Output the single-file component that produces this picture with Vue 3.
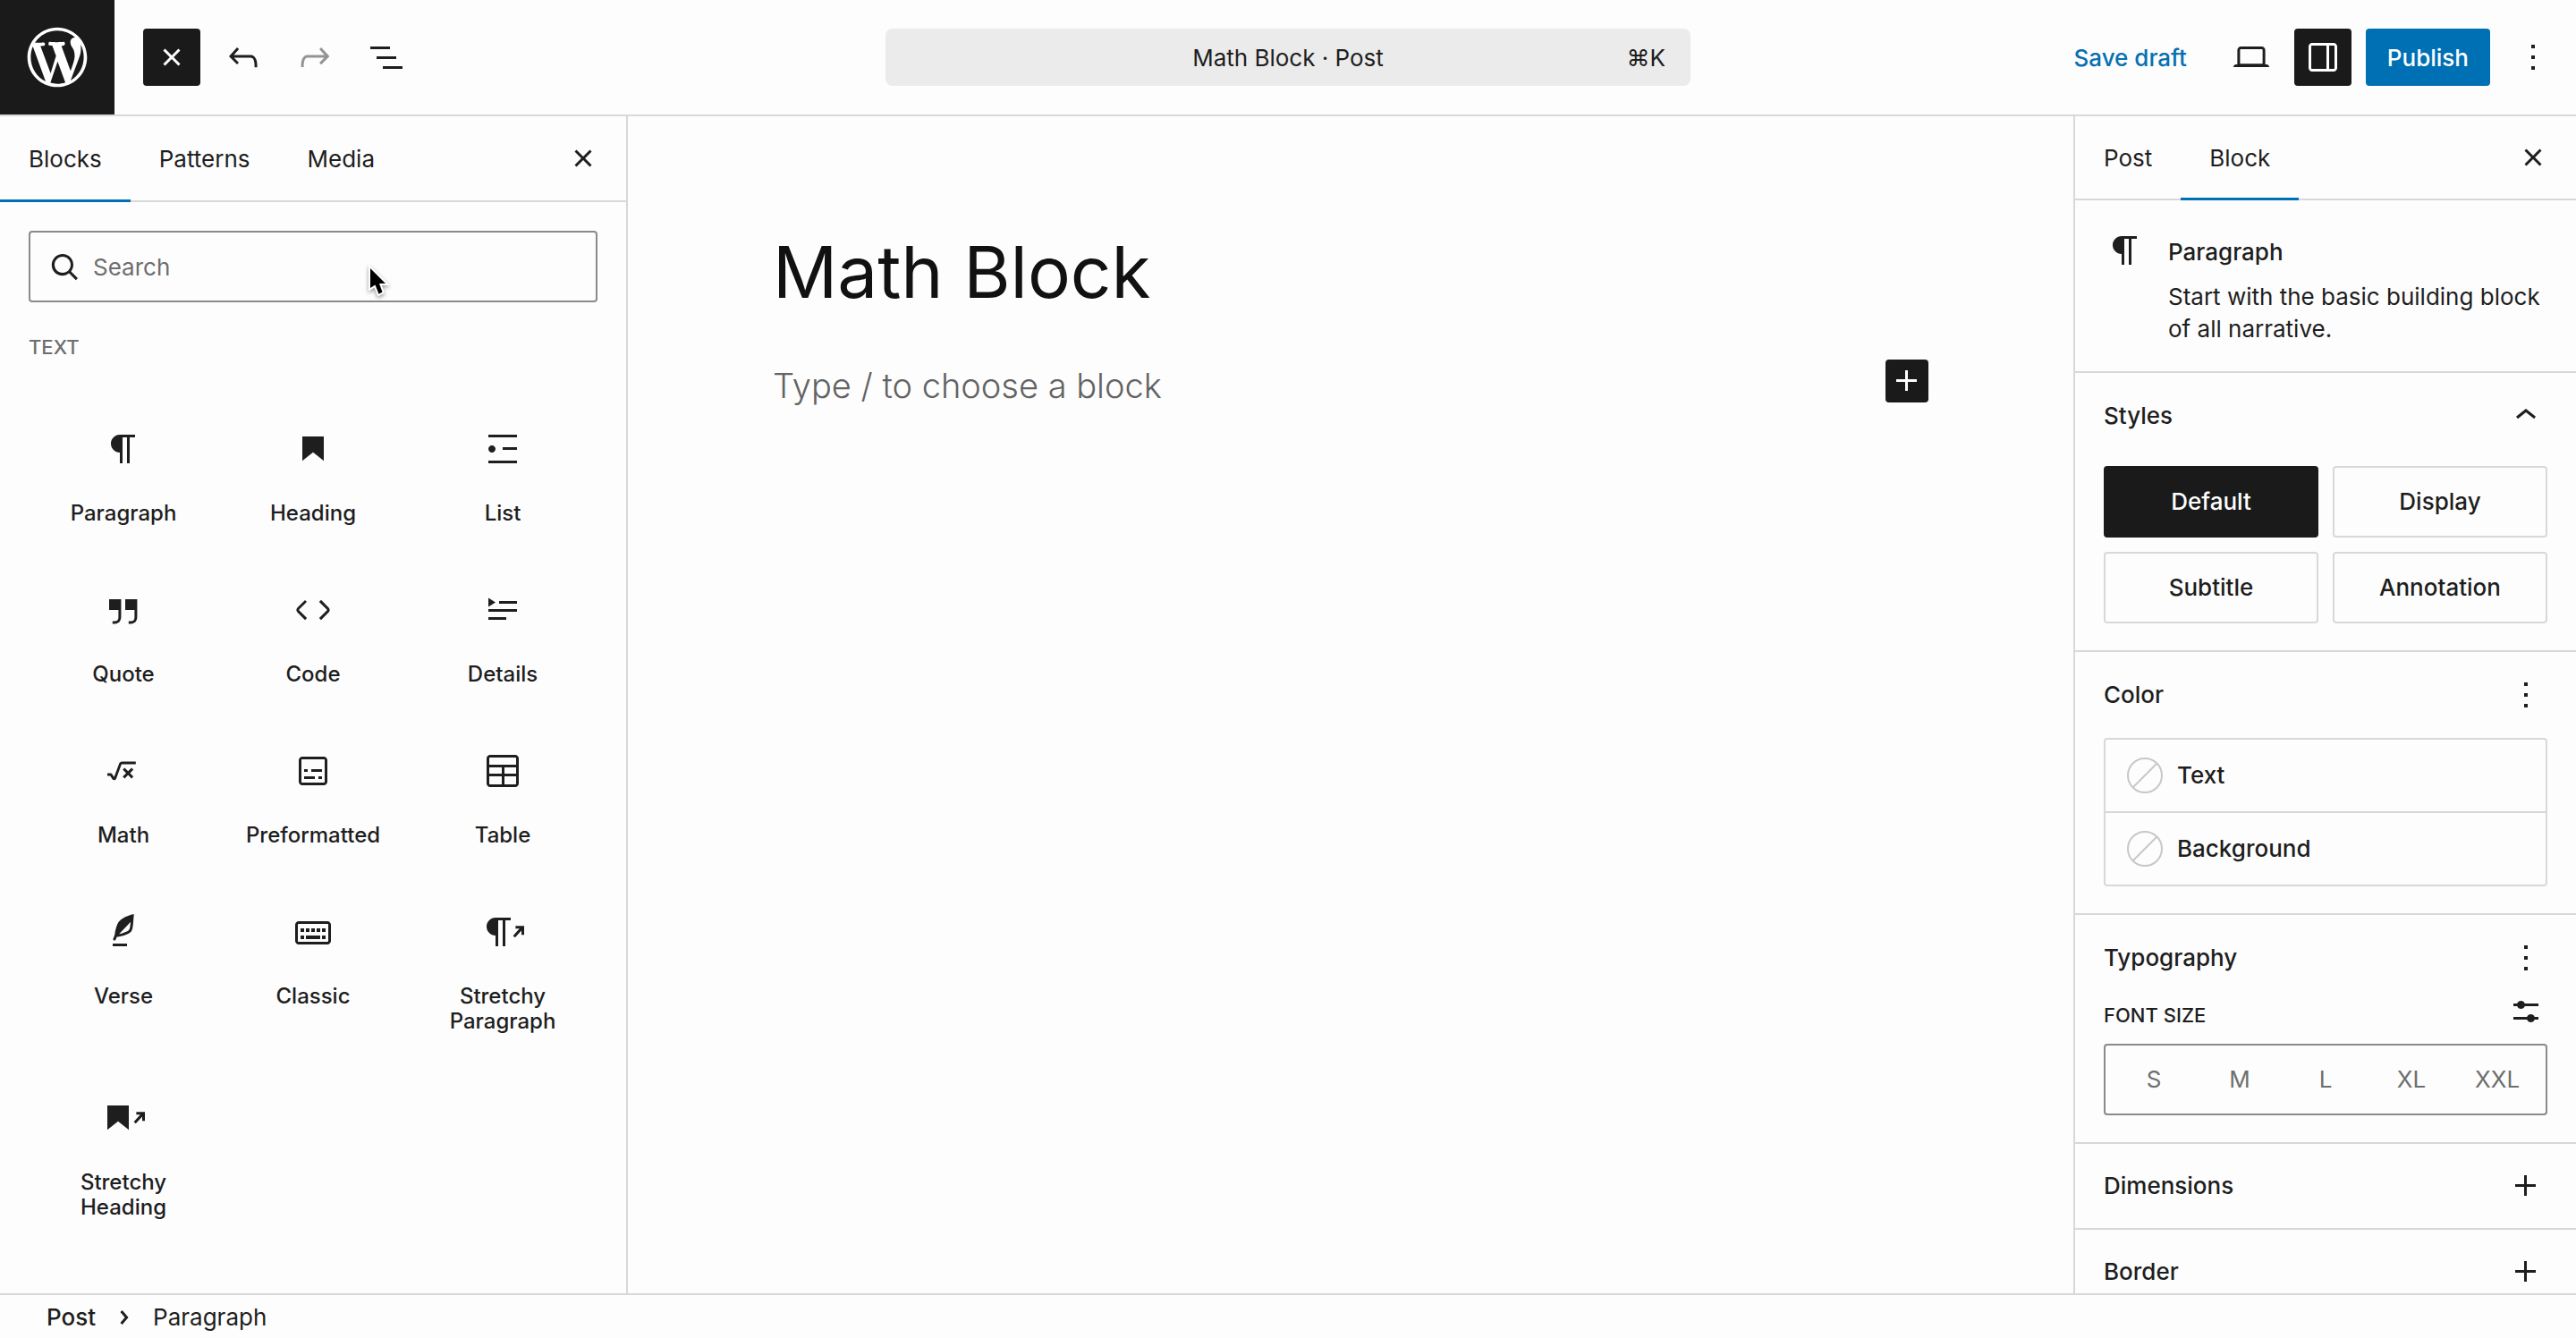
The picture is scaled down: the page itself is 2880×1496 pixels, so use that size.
<script setup>
import { h, ref } from 'vue'

const paths = {
  wordpress: 'M20 10c0-5.51-4.49-10-10-10C4.48 0 0 4.49 0 10c0 5.52 4.48 10 10 10 5.51 0 10-4.48 10-10zM7.78 15.37L4.37 6.22c.55-.02 1.17-.08 1.17-.08.5-.06.44-1.13-.06-1.11 0 0-1.45.11-2.37.11-.18 0-.37 0-.58-.01C4.12 2.69 6.87 1.11 10 1.11c2.33 0 4.45.87 6.05 2.34-.68-.11-1.65.39-1.65 1.58 0 .74.45 1.36.9 2.1.35.61.55 1.36.55 2.46 0 1.49-1.4 5-1.4 5l-3.03-8.37c.54-.02.82-.17.82-.17.5-.05.44-1.25-.06-1.22 0 0-1.44.12-2.38.12-.87 0-2.33-.12-2.33-.12-.5-.03-.56 1.2-.06 1.22l.92.08 1.26 3.41zM17.41 10c.24-.64.74-1.87.43-4.25.7 1.29 1.05 2.71 1.05 4.25 0 3.29-1.73 6.24-4.4 7.78.97-2.59 1.94-5.2 2.92-7.78zM6.1 18.09C3.12 16.65 1.11 13.53 1.11 10c0-1.3.23-2.48.72-3.59C3.25 10.3 4.67 14.2 6.1 18.09zm4.03-6.63l2.58 6.98c-.86.29-1.76.45-2.71.45-.79 0-1.57-.11-2.29-.33.81-2.38 1.62-4.74 2.42-7.1z',
  close: 'M12 13.06l3.712 3.713 1.061-1.06L13.061 12l3.712-3.712-1.06-1.06L12 10.938 8.288 7.227l-1.061 1.06L10.939 12l-3.712 3.712 1.06 1.061L12 13.061z',
  undo: 'M18.3 11.7c-.6-.6-1.4-.9-2.3-.9H6.7l2.9-3.3-1.1-1-4.5 5L8.5 16l1-1-2.7-2.7H16c.5 0 .9.2 1.3.5 1 1 1 3.4 1 4.5v.3h1.5v-.2c0-1.5 0-4.3-1.5-5.7z',
  redo: 'M15.6 6.5l-1.1 1 2.9 3.3H8c-.9 0-1.7.3-2.3.9-1.4 1.5-1.4 4.2-1.4 5.6v.2h1.5v-.3c0-1.1 0-3.5 1-4.5.3-.3.7-.5 1.3-.5h9.2L14.5 15l1.1 1.1 4.6-4.6-4.6-5z',
  listView: 'M3 6h11v1.5H3V6Zm3.5 5.5h11V13h-11v-1.5ZM21 17H10v1.5h11V17Z',
  laptop: 'M20.5 16h-.7V8c0-1.1-.9-2-2-2H6.2c-1.1 0-2 .9-2 2v8h-.7c-.8 0-1.5.7-1.5 1.5h20c0-.8-.7-1.5-1.5-1.5zM5.7 8c0-.3.2-.5.5-.5h11.6c.3 0 .5.2.5.5v7.6H5.7V8z',
  drawer: 'M18 4H6c-1.1 0-2 .9-2 2v12c0 1.1.9 2 2 2h12c1.1 0 2-.9 2-2V6c0-1.1-.9-2-2-2zm-4 14.5H6c-.3 0-.5-.2-.5-.5V6c0-.3.2-.5.5-.5h8v13zm4.5-.5c0 .3-.2.5-.5.5h-2.5v-13H18c.3 0 .5.2.5.5v12z',
  more: 'M13 19h-2v-2h2v2zm0-6h-2v-2h2v2zm0-6h-2V5h2v2z',
  search: 'M11 5c3.3 0 6 2.7 6 6 0 1.4-.5 2.7-1.3 3.7l3.8 3.8-1.1 1.1-3.8-3.8c-1 .8-2.3 1.3-3.7 1.3-3.3 0-6-2.7-6-6S7.7 5 11 5zm0 10.5c2.5 0 4.5-2 4.5-4.5s-2-4.5-4.5-4.5-4.5 2-4.5 4.5 2 4.5 4.5 4.5z',
  paragraph: 'm9.99609 14v-.2251l.00391.0001v6.225h1.5v-14.5h2.5v14.5h1.5v-14.5h3v-1.5h-8.50391c-2.76142 0-5 2.23858-5 5 0 2.7614 2.23858 5 5 5z',
  heading: 'M6 5V18.5911L12 13.8473L18 18.5911V5H6Z',
  list: 'M4 4v1.5h16V4H4zm8 8.5h8V11h-8v1.5zM4 20h16v-1.5H4V20zm4-8c0-1.1-.9-2-2-2s-2 .9-2 2 .9 2 2 2 2-.9 2-2z',
  quote: 'M13 6v6h5.2v4c0 .8-.2 1.4-.5 1.7-.6.6-1.6.6-2.5.5h-.3v1.5h.5c1 0 2.3-.1 3.3-1 .6-.6 1-1.6 1-2.8V6H13zm-9 6h5.2v4c0 .8-.2 1.4-.5 1.7-.6.6-1.6.6-2.5.5h-.3v1.5h.5c1 0 2.3-.1 3.3-1 .6-.6 1-1.6 1-2.8V6H4v6z',
  code: 'M20.8 10.7l-4.3-4.3-1.1 1.1 4.3 4.3c.1.1.1.3 0 .4l-4.3 4.3 1.1 1.1 4.3-4.3c.7-.8.7-1.9 0-2.6zM4.2 11.8l4.3-4.3-1-1-4.3 4.3c-.7.7-.7 1.8 0 2.5l4.3 4.3 1.1-1.1-4.3-4.3c-.2-.1-.2-.3-.1-.4z',
  details: 'M4 16h10v1.5H4V16Zm0-4.5h16V13H4v-1.5ZM10 7h10v1.5H10V7Zm-6-1.75 4 2.5-4 2.5v-5Z',
  math: 'M11.2 6.8c-.7 0-1.4.5-1.6 1.1l-2.8 7.5-1.2-1.8c-.1-.2-.4-.3-.6-.3H3v1.5h1.6l1.2 1.8c.6.9 1.9.7 2.2-.3l2.9-7.9s.1-.2.2-.2h7.8V6.7h-7.8Zm5.3 3.4-1.9 1.9-1.9-1.9-1.1 1.1 1.9 1.9-1.9 1.9 1.1 1.1 1.9-1.9 1.9 1.9 1.1-1.1-1.9-1.9 1.9-1.9-1.1-1.1Z',
  preformatted: 'M18 4H6c-1.1 0-2 .9-2 2v12c0 1.1.9 2 2 2h12c1.1 0 2-.9 2-2V6c0-1.1-.9-2-2-2zm.5 14c0 .3-.2.5-.5.5H6c-.3 0-.5-.2-.5-.5V6c0-.3.2-.5.5-.5h12c.3 0 .5.2.5.5v12zM7 16.5h6V15H7v1.5zm4-4h6V11h-6v1.5zM9 11H7v1.5h2V11zm6 5.5h2V15h-2v1.5z',
  table: 'M19 3H5c-1.1 0-2 .9-2 2v14c0 1.1.9 2 2 2h14c1.1 0 2-.9 2-2V5c0-1.1-.9-2-2-2zM5 4.5h14c.3 0 .5.2.5.5v3.5h-15V5c0-.3.2-.5.5-.5zm8 5.5h6.5v3.5H13V10zm-1.5 3.5h-7V10h7v3.5zm-7 5.5v-4h7v4.5H5c-.3 0-.5-.2-.5-.5zm14.5.5h-6V15h6.5v4c0 .3-.2.5-.5.5z',
  verse: 'M17.8 2l-.9.3c-.1 0-3.6 1-5.2 2.1C10 5.5 9.3 6.5 8.9 7.1c-.6.9-1.7 4.7-1.7 6.3l-.9 2.3c-.2.4 0 .8.4 1 .1 0 .2.1.3.1.3 0 .6-.2.7-.5l.6-1.5c.3 0 .7-.1 1.2-.2.7-.1 1.4-.3 2.2-.5.8-.2 1.6-.5 2.4-.8.7-.3 1.4-.7 1.9-1.2s.8-1.2 1-1.9c.2-.7.3-1.6.4-2.4.1-.8.1-1.7.2-2.5 0-.8.1-1.5.2-2.1V2zm-1.9 5.6c-.1.8-.2 1.5-.3 2.1-.2.6-.4 1-.6 1.3-.3.3-.8.6-1.4.9-.7.3-1.4.5-2.2.8-.6.2-1.3.3-1.8.4L15 7.5c.3-.3.6-.7 1-1.1 0 .4 0 .8-.1 1.2zM6 20h8v-1.5H6V20z',
  classic: 'M20 6H4c-1.1 0-2 .9-2 2v9c0 1.1.9 2 2 2h16c1.1 0 2-.9 2-2V8c0-1.1-.9-2-2-2zm.5 11c0 .3-.2.5-.5.5H4c-.3 0-.5-.2-.5-.5V8c0-.3.2-.5.5-.5h16c.3 0 .5.2.5.5v9zM10 10H8v2h2v-2zm-5 2h2v-2H5v2zm8-2h-2v2h2v-2zm-5 6h8v-2H8v2zm6-4h2v-2h-2v2zm3 0h2v-2h-2v2zm0 4h2v-2h-2v2zM5 16h2v-2H5v2z',
  stretchyParagraph: 'm7.99609 14v-.2251l.00391.0001v6.225h1.5v-14.5h2.5v14.5h1.5v-14.5h3v-1.5h-8.50391c-2.76142 0-5 2.23858-5 5 0 2.7614 2.23858 5 5 5zM19.2 8.6H24V13.600H22.500V11.300L18.900 15.100L17.800 14.100L21.400 10.100H19.200Z',
  stretchyHeading: 'M3 5V18.5911L9 13.8473L15 18.5911V5H3ZM19.2 8.6H24V13.600H22.500V11.300L18.900 15.100L17.800 14.100L21.400 10.100H19.200Z',
  chevronUp: 'M6.5 12.4L12 8l5.5 4.4-.9 1.2L12 10l-4.5 3.6-1-1.2z',
  chevronRight: 'M10.8622 8.04053L14.2805 12.0286L10.8622 16.0167L9.72327 15.0405L12.3049 12.0286L9.72327 9.01672L10.8622 8.04053Z',
  plus: 'M11 12.5V17.5H12.5V12.5H17.5V11H12.5V6H11V11H6V12.5H11Z',
  settings: 'm19 7.5h-7.628c-.3089-.87389-1.1423-1.5-2.122-1.5-.97966 0-1.81309.62611-2.12197 1.5h-2.12803v1.5h2.12803c.30888.87389 1.14231 1.5 2.12197 1.5.9797 0 1.8131-.62611 2.122-1.5h7.628zM19 15h-2.128c-.3089-.8739-1.1423-1.5-2.122-1.5s-1.8131.6261-2.122 1.5h-7.628v1.5h7.628c.3089.8739 1.1423 1.5 2.122 1.5s1.8131-.6261 2.122-1.5h2.128z'
}

const Icon = (props) => h('svg', {
  class: 'icon',
  viewBox: props.name === 'wordpress' ? '-2 -2 24 24' : '0 0 24 24',
  'aria-hidden': 'true'
}, [h('path', { d: paths[props.name] })])
Icon.props = ['name']

const blocks = [
  { icon: 'paragraph', label: 'Paragraph' },
  { icon: 'heading', label: 'Heading' },
  { icon: 'list', label: 'List' },
  { icon: 'quote', label: 'Quote' },
  { icon: 'code', label: 'Code' },
  { icon: 'details', label: 'Details' },
  { icon: 'math', label: 'Math' },
  { icon: 'preformatted', label: 'Preformatted' },
  { icon: 'table', label: 'Table' },
  { icon: 'verse', label: 'Verse' },
  { icon: 'classic', label: 'Classic' },
  { icon: 'stretchyParagraph', label: 'Stretchy Paragraph' },
  { icon: 'stretchyHeading', label: 'Stretchy Heading' }
]
const inserterTabs = ['Blocks', 'Patterns', 'Media']
const sidebarTabs = ['Post', 'Block']
const styles = ['Default', 'Display', 'Subtitle', 'Annotation']
const colors = ['Text', 'Background']
const sizes = ['S', 'M', 'L', 'XL', 'XXL']

const inserterTab = ref('Blocks')
const sidebarTab = ref('Block')
const style = ref('Default')
const size = ref('')
const search = ref('')
</script>

<template>
  <div class="editor">
    <header class="header">
      <a class="logo" href="#" aria-label="View Posts"><Icon name="wordpress" /></a>
      <div class="tools">
        <button class="icon-btn dark" aria-label="Close block inserter"><Icon name="close" /></button>
        <button class="icon-btn" aria-label="Undo"><Icon name="undo" /></button>
        <button class="icon-btn" aria-label="Redo" disabled><Icon name="redo" /></button>
        <button class="icon-btn" aria-label="Document overview"><Icon name="listView" /></button>
      </div>
      <button class="command">
        <span class="command-title">Math Block · Post</span>
        <span class="shortcut">⌘K</span>
      </button>
      <div class="actions">
        <button class="save">Save draft</button>
        <button class="icon-btn" aria-label="View"><Icon name="laptop" /></button>
        <button class="icon-btn dark" aria-label="Settings"><Icon name="drawer" /></button>
        <button class="publish">Publish</button>
        <button class="icon-btn" aria-label="Options"><Icon name="more" /></button>
      </div>
    </header>

    <div class="body">
      <aside class="inserter">
        <div class="tabs">
          <button
            v-for="t in inserterTabs"
            :key="t"
            class="tab"
            :class="{ active: t === inserterTab }"
            @click="inserterTab = t"
          >{{ t }}</button>
          <button class="icon-btn tabs-close" aria-label="Close"><Icon name="close" /></button>
        </div>
        <label class="search">
          <Icon name="search" />
          <input v-model="search" type="search" placeholder="Search" aria-label="Search">
          <svg class="cursor" viewBox="0 0 24 36" aria-hidden="true">
            <path d="M4 4 21 21H14l3.500 9.500-4 2.200L9.500 22.500 4 26z" />
          </svg>
        </label>
        <h2 class="category">Text</h2>
        <div class="blocks">
          <button v-for="b in blocks" :key="b.label" class="block">
            <Icon :name="b.icon" />
            <span class="block-label">{{ b.label }}</span>
          </button>
        </div>
      </aside>

      <main class="canvas">
        <div class="content">
          <h1 class="title">Math Block</h1>
          <div class="prompt">
            <p>Type / to choose a block</p>
            <button class="add" aria-label="Add block"><Icon name="plus" /></button>
          </div>
        </div>
      </main>

      <aside class="sidebar">
        <div class="tabs">
          <button
            v-for="t in sidebarTabs"
            :key="t"
            class="tab"
            :class="{ active: t === sidebarTab }"
            @click="sidebarTab = t"
          >{{ t }}</button>
          <button class="icon-btn tabs-close" aria-label="Close settings"><Icon name="close" /></button>
        </div>

        <section class="card">
          <Icon name="paragraph" />
          <div>
            <h2>Paragraph</h2>
            <p>Start with the basic building block of all narrative.</p>
          </div>
        </section>

        <section class="panel">
          <div class="panel-head">
            <h2>Styles</h2>
            <button class="small-btn" aria-label="Toggle styles"><Icon name="chevronUp" /></button>
          </div>
          <div class="styles">
            <button
              v-for="s in styles"
              :key="s"
              class="style"
              :class="{ selected: s === style }"
              @click="style = s"
            >{{ s }}</button>
          </div>
        </section>

        <section class="panel">
          <div class="panel-head">
            <h2>Color</h2>
            <button class="small-btn" aria-label="Color options"><Icon name="more" /></button>
          </div>
          <div class="colors">
            <button v-for="c in colors" :key="c" class="color">
              <svg class="swatch" viewBox="0 0 40 40" aria-hidden="true">
                <circle cx="20" cy="20" r="19" />
                <path d="M6.500 33.500 33.500 6.500" />
              </svg>
              {{ c }}
            </button>
          </div>
        </section>

        <section class="panel">
          <div class="panel-head">
            <h2>Typography</h2>
            <button class="small-btn" aria-label="Typography options"><Icon name="more" /></button>
          </div>
          <div class="size-head">
            <h3>Font size</h3>
            <button class="small-btn" aria-label="Set custom size"><Icon name="settings" /></button>
          </div>
          <div class="sizes">
            <button v-for="s in sizes" :key="s" class="size" @click="size = s">{{ s }}</button>
          </div>
        </section>

        <section class="panel closed">
          <div class="panel-head">
            <h2>Dimensions</h2>
            <button class="small-btn" aria-label="Dimensions options"><Icon name="plus" /></button>
          </div>
        </section>

        <section class="panel closed">
          <div class="panel-head">
            <h2>Border</h2>
            <button class="small-btn" aria-label="Border options"><Icon name="plus" /></button>
          </div>
        </section>
      </aside>
    </div>

    <footer class="footer">
      <a class="crumb" href="#">Post</a>
      <Icon name="chevronRight" />
      <span>Paragraph</span>
    </footer>
  </div>
</template>

<style>
body {
  background: #fdfdfd;
}
</style>

<style scoped>
* {
  box-sizing: border-box;
}

.editor {
  display: flex;
  flex-direction: column;
  height: 100vh;
  overflow: hidden;
  color: #1e1e1e;
  background: #fdfdfd;
  font-family: Inter, "Liberation Sans", sans-serif;
  font-size: 26px;
  line-height: 36px;
}

h1, h2, h3, p {
  margin: 0;
}

h2 {
  font-size: 26px;
  font-weight: 500;
}

a {
  color: inherit;
  text-decoration: none;
}

button {
  margin: 0;
  padding: 0;
  border: 0;
  background: none;
  color: inherit;
  font: inherit;
}

.icon {
  display: block;
  flex: none;
  width: 48px;
  height: 48px;
  fill: currentColor;
  overflow: visible;
}

.icon-btn {
  display: flex;
  align-items: center;
  justify-content: center;
  width: 64px;
  height: 64px;
  border-radius: 4px;
}

.icon-btn:disabled {
  color: #949494;
}

.dark {
  color: #fff;
  background: #1a1a1a;
}

/* header */
.header {
  display: grid;
  grid-template-columns: 1fr minmax(0, 900px) 1fr;
  align-items: center;
  flex: none;
  height: 130px;
  border-bottom: 2px solid #d8d8d8;
}

.header > * {
  grid-row: 1;
}

.logo {
  grid-column: 1;
  display: flex;
  align-items: center;
  justify-content: center;
  width: 128px;
  height: 128px;
  color: #fff;
  background: #1a1a1a;
}

.logo .icon {
  width: 80px;
  height: 80px;
}

.tools {
  grid-column: 1;
  display: flex;
  gap: 16px;
  margin-left: 160px;
}

.command {
  grid-column: 2;
  display: grid;
  grid-template-columns: 1fr auto 1fr;
  align-items: center;
  height: 64px;
  padding: 2px 28px 0;
  border-radius: 8px;
  background: #ebebeb;
}

.command-title {
  grid-column: 2;
}

.shortcut {
  text-align: right;
}

.actions {
  grid-column: 3;
  display: flex;
  justify-content: flex-end;
  gap: 16px;
  padding-right: 16px;
}

.save {
  padding: 2px 24px 0;
  color: #0670b2;
  font-weight: 500;
}

.publish {
  padding: 2px 24px 0;
  border-radius: 4px;
  color: #fff;
  background: #0070b4;
  font-weight: 500;
}

/* columns under the header */
.body {
  display: flex;
  flex: 1;
  min-height: 0;
}

.tabs {
  display: flex;
  flex: none;
  height: 96px;
  border-bottom: 2px solid #d8d8d8;
}

.tab {
  height: 96px;
  padding: 0 32px;
}

.tab.active {
  box-shadow: inset 0 -3px #0070b4;
}

.tabs-close {
  align-self: center;
  margin-left: auto;
  margin-right: 16px;
}

.inserter {
  display: flex;
  flex-direction: column;
  flex: none;
  width: 702px;
  border-right: 2px solid #d8d8d8;
}

.search {
  position: relative;
  display: flex;
  align-items: center;
  gap: 8px;
  height: 80px;
  margin: 32px 32px 0;
  padding: 0 14px;
  border: 2px solid #8a8a8a;
  border-radius: 4px;
}

.search input {
  flex: 1;
  min-width: 0;
  padding: 2px 0 0;
  border: 0;
  outline: 0;
  background: none;
  color: inherit;
  font: inherit;
}

.search input::placeholder {
  color: #6e6e6e;
  opacity: 1;
}

.cursor {
  position: absolute;
  left: 376px;
  top: 36px;
  width: 24px;
  height: 36px;
  overflow: visible;
  fill: #000;
  stroke: #fff;
  stroke-width: 4px;
  paint-order: stroke;
  filter: drop-shadow(0 2px 2px rgba(0, 0, 0, 0.4));
}

.category {
  margin: 32px 32px 0;
  color: #6e6e6e;
  font-size: 22px;
  line-height: 36px;
  text-transform: uppercase;
}

.blocks {
  display: grid;
  grid-template-columns: repeat(3, 1fr);
  align-items: start;
  margin: 32px 32px 0;
}

.block {
  display: flex;
  flex-direction: column;
  align-items: center;
  gap: 34px;
  padding: 40px 16px 30px;
}

.block-label {
  font-size: 24px;
  font-weight: 500;
  line-height: 28px;
}

/* canvas */
.canvas {
  flex: 1;
  min-width: 0;
  padding: 120px 64px 0;
}

.content {
  max-width: 1292px;
  margin: 0 auto;
}

.title {
  color: #111;
  font-size: 80px;
  font-weight: 400;
  line-height: 108px;
}

.prompt {
  display: flex;
  align-items: flex-start;
  justify-content: space-between;
  margin-top: 44px;
  color: #636363;
  font-size: 38px;
  font-weight: 300;
  line-height: 58px;
}

.add {
  border-radius: 4px;
  color: #fff;
  background: #1a1a1a;
}

/* settings sidebar */
.sidebar {
  flex: none;
  width: 562px;
  overflow: hidden;
  border-left: 2px solid #d8d8d8;
}

.sidebar .tabs {
  height: 94px;
}

.sidebar .tab {
  height: 94px;
}

.card {
  display: flex;
  gap: 24px;
  padding: 32px 32px 29px;
}

.card h2 {
  margin: 8px 0 14px;
}

.panel {
  padding: 16px 32px 30px;
  border-top: 2px solid #d8d8d8;
}

.panel-head {
  display: flex;
  align-items: center;
  justify-content: space-between;
  height: 64px;
}

.small-btn {
  flex: none;
}

.styles {
  display: grid;
  grid-template-columns: 1fr 1fr;
  gap: 16px;
  margin-top: 24px;
}

.style {
  height: 80px;
  border: 2px solid #d8d8d8;
  border-radius: 4px;
  font-weight: 500;
}

.style.selected {
  border-color: #1a1a1a;
  color: #fff;
  background: #1a1a1a;
}

.colors {
  margin-top: 16px;
  border: 2px solid #d8d8d8;
  border-radius: 4px;
}

.color {
  display: flex;
  align-items: center;
  gap: 16px;
  width: 100%;
  height: 80px;
  padding: 0 24px;
  font-weight: 500;
}

.color + .color {
  height: 82px;
  border-top: 2px solid #d8d8d8;
}

.swatch {
  width: 40px;
  height: 40px;
  fill: none;
  stroke: #c8c8c8;
  stroke-width: 2px;
}

.size-head {
  display: flex;
  align-items: center;
  justify-content: space-between;
  height: 48px;
  margin-top: 4px;
}

.size-head h3 {
  align-self: flex-end;
  font-size: 22px;
  font-weight: 500;
  line-height: 40px;
  text-transform: uppercase;
}

.sizes {
  display: grid;
  grid-template-columns: repeat(5, 1fr);
  height: 80px;
  margin-top: 12px;
  padding: 0 6px;
  border: 2px solid #8a8a8a;
  border-radius: 4px;
  color: #6e6e6e;
}

.panel.closed {
  padding: 15px 32px;
}

/* breadcrumb */
.footer {
  display: flex;
  align-items: center;
  gap: 8px;
  flex: none;
  height: 50px;
  padding: 2px 52px 0;
  border-top: 2px solid #d8d8d8;
}

.crumb {
  font-weight: 500;
}
</style>
